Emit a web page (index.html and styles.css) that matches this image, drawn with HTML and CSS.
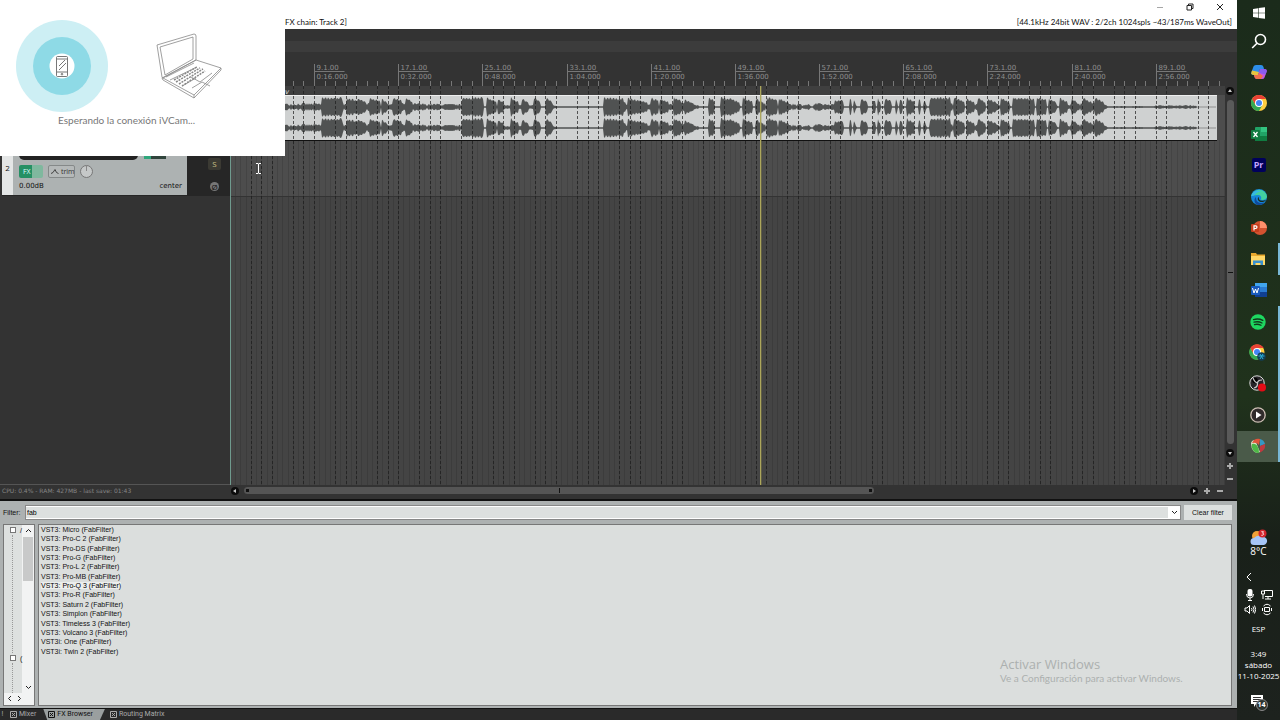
FILE: index.html
```html
<!DOCTYPE html>
<html lang="es">
<head>
<meta charset="utf-8">
<title>FX chain: Track 2</title>
<link rel="stylesheet" href="styles.css">
</head>
<body>
<div class="desktop">
  <main class="daw">
    <header class="titlebar">
      <div class="winbtns">
        <button class="winbtn faded" aria-label="Minimizar"><svg width="8" height="8"><path d="M1 4.500h6"/></svg></button>
        <button class="winbtn" aria-label="Restaurar"><svg width="8" height="8"><path d="M1 2.500h4.500v4.500h-4.500zM2.500 2.500v-1.500h4.500v4.500h-1.500"/></svg></button>
        <button class="winbtn" aria-label="Cerrar"><svg width="8" height="8"><path d="M1 1l6 6M7 1l-6 6"/></svg></button>
      </div>
      <div class="titleline"><span class="chain">FX chain: Track 2]</span><span>[44.1kHz 24bit WAV : 2/2ch 1024spls ~43/187ms WaveOut]</span></div>
    </header>
    <div class="toolstrip"></div>
    <section class="workspace">
      <aside class="tcp">
        <div class="track">
          <div class="tracknum">2</div>
          <div class="trackbody">
            <div class="faders"><i class="fader"></i><i class="meter"></i></div>
            <div class="trackrow">
              <button class="fx">FX</button>
              <button class="trim"><svg width="9" height="7"><path d="M1 5.500l2-1 2-3 1.500 3 2 1" fill="none" stroke="#444"/></svg>trim</button>
              <button class="knob" aria-label="Pan"></button>
            </div>
            <div class="trackvals"><span>0.00dB</span><span>center</span></div>
          </div>
          <div class="trackside">
            <button class="solo">S</button>
            <button class="phase">Ø</button>
          </div>
        </div>
        <p class="status">CPU: 0.4% - RAM: 427MB - last save: 01:43</p>
      </aside>
      <div class="arrange">
        <svg class="ruler" id="ruler"></svg>
        <svg class="lanes" id="lanes"></svg>
        <div class="hscroll">
          <button class="dot" aria-label="Izquierda"><svg width="8" height="8"><path d="M5 2v4l-3-2z"/></svg></button>
          <div class="htrack"><div class="hthumb"><i></i><b></b><i></i></div></div>
          <button class="dot" aria-label="Derecha"><svg width="8" height="8"><path d="M3 2v4l3-2z"/></svg></button>
          <button class="zoom" aria-label="Acercar"><svg width="8" height="8"><path d="M1 4h6M4 1v6"/></svg></button>
          <button class="zoom" aria-label="Alejar"><svg width="8" height="8"><path d="M1 4h6"/></svg></button>
        </div>
      </div>
      <div class="vscroll">
        <button class="dot" aria-label="Arriba"><svg width="8" height="8"><path d="M2 5h4l-2-3z"/></svg></button>
        <div class="vthumb"></div>
        <button class="dot" aria-label="Abajo"><svg width="8" height="8"><path d="M2 3h4l-2 3z"/></svg></button>
        <button class="zoom" aria-label="Acercar vertical"><svg width="8" height="8"><path d="M1 4h6M4 1v6"/></svg></button>
        <button class="zoom" aria-label="Alejar vertical"><svg width="8" height="8"><path d="M1 4h6"/></svg></button>
      </div>
    </section>
    <section class="browser">
      <div class="filterbar">
        <label for="filter">Filter:</label>
        <div class="combo"><input id="filter" type="text" value="fab"><button aria-label="Historial"><svg width="7" height="5"><path d="M1 1l2.500 2.500 2.500-2.500"/></svg></button></div>
        <button class="clear">Clear filter</button>
      </div>
      <div class="panes">
        <div class="tree">
          <div class="treemain">
            <div class="nodes">
              <div class="node"><button aria-label="Expandir"></button>/</div>
              <div class="branch"></div>
              <div class="node"><button aria-label="Expandir"></button>(</div>
              <div class="branch short"></div>
            </div>
            <div class="treescroll">
              <svg width="7" height="5"><path d="M1 4l2.500-2.500 2.500 2.500"/></svg>
              <i></i>
              <svg width="7" height="5"><path d="M1 1l2.500 2.500 2.500-2.500"/></svg>
            </div>
          </div>
          <div class="treefoot"><svg width="5" height="7"><path d="M4 1l-2.500 2.500 2.500 2.500"/></svg><svg width="5" height="7"><path d="M1 1l2.500 2.500-2.500 2.500"/></svg></div>
        </div>
        <div class="results">
          <ul>
            <li>VST3: Micro (FabFilter)</li>
            <li>VST3: Pro-C 2 (FabFilter)</li>
            <li>VST3: Pro-DS (FabFilter)</li>
            <li>VST3: Pro-G (FabFilter)</li>
            <li>VST3: Pro-L 2 (FabFilter)</li>
            <li>VST3: Pro-MB (FabFilter)</li>
            <li><mark>VST3: Pro-Q 3 (FabFilter)</mark></li>
            <li>VST3: Pro-R (FabFilter)</li>
            <li>VST3: Saturn 2 (FabFilter)</li>
            <li>VST3: Simplon (FabFilter)</li>
            <li>VST3: Timeless 3 (FabFilter)</li>
            <li>VST3: Volcano 3 (FabFilter)</li>
            <li>VST3i: One (FabFilter)</li>
            <li>VST3i: Twin 2 (FabFilter)</li>
          </ul>
        </div>
      </div>
    </section>
    <nav class="tabs">
      <span class="bang">!</span>
      <button class="tab"><svg width="7" height="7"><path d="M.5.5h6v6h-6zM2 2l3 3M5 2l-3 3"/></svg>Mixer</button>
      <button class="tab active"><svg width="7" height="7"><path d="M.5.5h6v6h-6zM2 2l3 3M5 2l-3 3"/></svg>FX Browser</button>
      <button class="tab"><svg width="7" height="7"><path d="M.5.5h6v6h-6zM2 2l3 3M5 2l-3 3"/></svg>Routing Matrix</button>
    </nav>
  </main>

  <aside class="taskbar">
    <button class="start" aria-label="Inicio"><svg width="16" height="16" viewBox="0 0 16 16" fill="#fff"><path d="M2 4l5-.8v4.500H2zM7.600 3.100L14 2.200v5.500H7.600zM2 8.300h5v4.500L2 12zM7.600 8.300H14v5.500l-6.400-.9z"/></svg></button>
    <nav class="apps">
      <button aria-label="Buscar"><svg width="16" height="16" viewBox="0 0 16 16" fill="none" stroke="#fff" stroke-width="1.600"><circle cx="9.500" cy="6.500" r="5"/><path d="M6 10.200L1.200 15"/></svg></button>
      <button aria-label="Copilot"><svg width="16" height="16" viewBox="0 0 16 16"><path d="M5 1h5q2 0 2.500 2l.5 2H9L7 11H2.500Q-.5 11 .5 8l2-5.500Q3 1 5 1z" fill="#2d8eea"/><path d="M1 6.500L.5 8q-1 3 2 3H7l1-3z" fill="#e8c53e"/><path d="M11 15H6q-2 0-2.500-2L3 11h4l2-6h4.500q3 0 2 3l-2 5.500Q13 15 11 15z" fill="#c458df"/><path d="M9 5h4.500q3 0 2 3l-1 2.500L8 9z" fill="#8a5cf0"/><path d="M3 11h4l1-2 4 3-2 3H6q-2 0-2.500-2z" fill="#f0704c"/></svg></button>
      <button aria-label="Chrome"><svg width="16" height="16" viewBox="0 0 16 16"><circle cx="8" cy="8" r="8" fill="#ffcd40"/><path d="M1 4a8 8 0 0 1 14 0H8L4.500 10z" fill="#e94235"/><path d="M1 4a8 8 0 0 0 7 12l3.500-6-3.500 2-3.500-2z" fill="#34a853"/><circle cx="8" cy="8" r="4" fill="#fff"/><circle cx="8" cy="8" r="3" fill="#4285f4"/></svg></button>
      <button aria-label="Excel"><svg width="16" height="16" viewBox="0 0 16 16"><rect x="4" y="1" width="12" height="14" rx="1" fill="#21a366"/><path d="M10 1h6v5h-6z" fill="#33c481"/><path d="M4 10h12v5H4z" fill="#107c41"/><rect y="4" width="9" height="9" rx="1" fill="#107c41"/><path d="M2.500 6l4 5M6.500 6l-4 5" stroke="#fff" stroke-width="1.300"/></svg></button>
      <button aria-label="Premiere Pro"><span class="pr">Pr</span></button>
      <button aria-label="Edge"><svg width="16" height="16" viewBox="0 0 16 16"><circle cx="8" cy="8" r="8" fill="#1687d8"/><path d="M.3 7A8 8 0 0 1 16 7.500c0 3-4 4-6.500 3 1.500-1 1-4.500-2.500-4.500S1 7 .3 7z" fill="#42cfa0"/><path d="M.3 7C1.500 2 7 .500 10.500 3 6 2 5 5 3.500 6S.5 7.500.3 7z" fill="#35b8e8"/><path d="M5 8c-.5 5 4 7 8.500 5.500A8 8 0 0 1 7 16C3 15 2.500 10 5 8z" fill="#114a9b"/><path d="M8 8c-1 3 2 5 7 3-2 3-7 2.500-8 0-.6-1.200 0-2.500 1-3z" fill="#1b2a1a"/></svg></button>
      <button aria-label="PowerPoint"><svg width="16" height="16" viewBox="0 0 16 16"><circle cx="9" cy="8" r="7" fill="#d35230"/><path d="M9 1a7 7 0 0 1 7 7H9z" fill="#ff8f6b"/><rect y="4" width="8" height="8" rx="1" fill="#c43e1c"/><path d="M3 10.500V5.800h1.600q1.400 0 1.400 1.300T4.600 8.500H3" fill="none" stroke="#fff" stroke-width="1.200"/></svg></button>
      <button class="running" aria-label="Explorador"><svg width="16" height="16" viewBox="0 0 16 16"><path d="M1 2h5l1 1.500h8V14H1z" fill="#e8a92e"/><path d="M1 5h14v9H1z" fill="#ffd867"/><path d="M3 14V9.500h10V14h-2.500v-2h-5v2z" fill="#3a91cf"/></svg></button>
      <button aria-label="Word"><svg width="16" height="16" viewBox="0 0 16 16"><rect x="4" y="1" width="12" height="14" rx="1" fill="#2b7cd3"/><path d="M4 1h12v4H4z" fill="#41a5ee"/><path d="M4 10h12v5H4z" fill="#103f91"/><rect y="4" width="9" height="9" rx="1" fill="#185abd"/><path d="M1.500 6l1.500 5 1.500-4 1.500 4 1.500-5" fill="none" stroke="#fff"/></svg></button>
      <button class="running" aria-label="Spotify"><svg width="16" height="16" viewBox="0 0 16 16"><circle cx="8" cy="8" r="7.700" fill="#1ed760"/><path d="M3.500 5.600q5-1.500 9.300.8M4 8.200q4.200-1.200 8 .8M4.500 10.600q3.500-.9 6.500.7" fill="none" stroke="#10391c" stroke-width="1.300" stroke-linecap="round"/></svg></button>
      <button class="running" aria-label="Chrome, perfil"><svg width="17" height="17" viewBox="0 0 17 17"><circle cx="8" cy="8" r="7.500" fill="#ffcd40"/><path d="M1.300 4a8 8 0 0 1 13.500 0H8L4.500 10z" fill="#e94235"/><path d="M1.300 4a8 8 0 0 0 7 12l3-6-3.300 2-3.500-2z" fill="#34a853"/><circle cx="8" cy="8" r="4" fill="#fff"/><circle cx="8" cy="8" r="3" fill="#4285f4"/><circle cx="12.500" cy="12.500" r="4.300" fill="#123e55"/><path d="M9.500 12h6M11 10l3 5M14 10l-3 5" stroke="#2eb3dc"/></svg></button>
      <button class="running" aria-label="OBS"><svg width="17" height="17" viewBox="0 0 17 17"><circle cx="8" cy="8" r="7.200" fill="#272529" stroke="#ddd"/><circle cx="6" cy="5.500" r="2.800" fill="#000"/><path d="M4 3q2 5 5 5M13 5q-5 0-4.500 4M5 13q4-1 3.500-5" fill="none" stroke="#c8c8c8" stroke-width="1.200"/><circle cx="13" cy="12.500" r="4" fill="#e30c16"/></svg></button>
      <button class="running" aria-label="Reproductor"><svg width="16" height="16" viewBox="0 0 16 16"><circle cx="8" cy="8" r="7.200" fill="#302b2b" stroke="#cfc0b6" stroke-width="1.300"/><path d="M6 4.500v7L11.500 8z" fill="#fff"/></svg></button>
      <button class="running current" aria-label="REAPER"><svg width="16" height="16" viewBox="0 0 16 16"><path d="M1 5q1-3 4-3l5 12q-4 2-6.500-1T1 5z" fill="#dfe3c5"/><path d="M2 6q3-1 5 1.500t2 7.500q-4 .5-6-3T2 6z" fill="#4eb748"/><path d="M4 2q3-2 6-1l-1 6q-2-3-7-2z" fill="#e2553c"/><path d="M10 1q4 1 5 5l-5 2z" fill="#3597c4"/><path d="M15 6q1 6-5 8.500V8z" fill="#c03a3f"/></svg></button>
    </nav>
    <div class="tray">
      <div class="weather"><svg width="18" height="17" viewBox="0 0 18 17"><circle cx="7" cy="7" r="5" fill="#f0a136"/><path d="M4 16a3.500 3.500 0 0 1 0-7q4-4 8-1a4 4 0 0 1 2 8z" fill="#a6c5f7"/><circle cx="12.500" cy="4.500" r="4" fill="#d3222c"/><path d="M11.300 2.700h2.200l-1 1.500q1.300 0 1.200 1.100t-2.400 1" fill="none" stroke="#fff" stroke-width=".8"/></svg><span>8°C</span></div>
      <svg class="chev" width="6" height="10" viewBox="0 0 6 10" fill="none" stroke="#fff"><path d="M5 1L1 5l4 4"/></svg>
      <div class="trayicons">
        <svg width="12" height="13" viewBox="0 0 12 13"><rect x="3.500" y="1" width="5" height="7.500" rx="2" fill="#fff"/><path d="M2.500 6q0 4 3.500 4t3.500-4M6 10v2.500M4 12.500h4" fill="none" stroke="#fff"/></svg>
        <svg width="12" height="13" viewBox="0 0 12 13" fill="none" stroke="#fff"><path d="M3 2.500h8.500v6H4M7 8.500V11M4 11h6M.5 3h3v3h-3zM2 6v5"/></svg>
        <svg width="12" height="13" viewBox="0 0 12 13" fill="none" stroke="#fff"><path d="M1 5h2l2.500-2.500v8L3 8H1zM7.500 5q1 1.500 0 3M9 3.500q2 3 0 6M10.500 2.500q2.500 4 0 8"/></svg>
        <svg width="12" height="13" viewBox="0 0 12 13" fill="none" stroke="#fff"><path d="M3.500 4.500h5v4h-5zM2.500 3q3.500-3.500 7 0M2.500 10q3.500 3.500 7 0M1.500 5v3M10.500 5v3"/></svg>
      </div>
      <span class="lang">ESP</span>
      <div class="clock"><span>3:49</span><span>sábado</span><span>11-10-2025</span></div>
      <button class="notif" aria-label="14 notificaciones"><svg width="18" height="18" viewBox="0 0 18 18"><path d="M1 2h12v9H6l-2 3v-3H1z" fill="#fff"/><path d="M3 4.500h8M3 6.500h8M3 8.500h5" stroke="#333"/><circle cx="12" cy="12" r="5.500" fill="#2d332e" stroke="#888"/></svg><b>14</b></button>
    </div>
  </aside>

  <section class="ivcam">
    <div class="devices">
      <svg class="phone" width="92" height="92" viewBox="0 0 92 92"><circle cx="46" cy="46" r="46" fill="#cdeff4"/><circle cx="46" cy="46" r="29" fill="#8edae6"/><circle cx="46" cy="46" r="12.500" fill="#fff"/><g fill="none" stroke="#555" stroke-width=".8"><rect x="40.500" y="36.500" width="11" height="20" rx="1"/><path d="M41 39h10M41 52h10M43 46l6-6M43 50l7-7"/><circle cx="46" cy="54.200" r=".8"/></g></svg>
      <svg class="laptop" width="66" height="66" viewBox="0 0 66 66" fill="none" stroke="#888" stroke-width=".8"><path d="M1 12L38 1q2 0 2 2v24L7 45q-1 0-1-1zM4 14l33-10v22L9 42zM6 45l34-18 25 8v2L38 65 7 47zM7 45l31 17 27-27M38 62v3M10 44l28-14M14 47l27-13M36 55l10-6 8 4M35 44l9 5 12-9M28 52l12-7"/><g stroke-dasharray="2 1" stroke-width="1.500"><path d="M18 47l23-13M20 49l24-14M23 51l24-15M26 53l23-15"/></g></svg>
    </div>
    <p>Esperando la conexión iVCam...</p>
  </section>
  <svg class="cursor" width="7" height="11" viewBox="0 0 7 11" fill="none" stroke="#fff"><path d="M1 .5h2l.5.5.5-.5h2M3.500 1v9M1 10.500h2l.5-.5.5.5h2"/></svg>
  <div class="watermark"><span>Activar Windows</span><small>Ve a Configuración para activar Windows.</small></div>
</div>
<script src="timeline.js"></script>
</body>
</html>
```
FILE: styles.css
```css
* { box-sizing: border-box; }
body, p, ul { margin: 0; padding: 0; }
body { font-family: "Open Sans", "Noto Sans", sans-serif; font-size: 8px; color: #111; overflow: hidden; }
button { border: 0; padding: 0; background: none; font: inherit; color: inherit; }
svg { display: block; flex: none; }
.desktop { position: relative; display: flex; height: 100vh; background: #1b2a1a; }
.daw { flex: 1; min-width: 0; display: flex; flex-direction: column; background: #333; }

.titlebar { background: #fff; height: 29px; }
.winbtns { display: flex; justify-content: flex-end; gap: 22px; height: 15px; padding: 3px 13px 0 0; }
.winbtn { height: 8px; width: 8px; }
.winbtn path { fill: none; stroke: #222; }
.faded { opacity: .4; }
.titleline { display: flex; justify-content: space-between; padding: 0 5px 0 285px; font-family: Lato, sans-serif; line-height: 14px; }
.toolstrip { height: 23px; background: #3c3c3c; border-top: 12px solid #333; }

.workspace { flex: 1; min-height: 0; display: flex; border-bottom: 2px solid #111; }
.tcp { width: 230px; display: flex; flex-direction: column; justify-content: space-between; background: #333; }
.track { display: flex; height: 101px; margin: 43px 0 0 2px; background: #262626; }
.tracknum { width: 11px; background: #e4e6e6; text-align: center; line-height: 12px; padding-top: 67px; height: 100px; }
.trackbody { flex: 1; height: 100px; background: #adb2b2; padding: 58px 5px 0 6px; display: flex; flex-direction: column; gap: 4px; }
.faders { display: flex; gap: 6px; height: 7px; flex: none; }
.fader { width: 119px; background: #222; border-radius: 0 0 5px 5px; }
.meter { width: 22px; height: 6px; background: linear-gradient(90deg, #2fa77c 30%, #30443c 30%); }
.trackrow { display: flex; align-items: center; gap: 5px; height: 14px; flex: none; }
.fx { width: 24px; height: 13px; border-radius: 2px; color: #dff; text-align: left; padding-left: 4px; font-size: 7px; background: linear-gradient(90deg, #259064 55%, #7fb89e 55%); }
.trim { display: flex; align-items: center; gap: 2px; width: 27px; height: 13px; border: 1px solid #858989; border-radius: 2px; padding-left: 1px; font-size: 7px; color: #333; background: #b5b9b9; }
.knob { width: 13px; height: 13px; border: 1px solid #777; border-radius: 50%; background: linear-gradient(90deg, transparent 5px, #888 5px, #888 6px, transparent 6px) 0 0 / 100% 5px no-repeat #c5c8c8; }
.trackvals { display: flex; justify-content: space-between; font: 7px/8px "DejaVu Sans", sans-serif; }
.trackside { width: 43px; display: flex; flex-direction: column; align-items: flex-end; gap: 12px; padding: 63px 9px 0 0; }
.solo { width: 13px; height: 12px; background: #3b3a33; color: #c9c086; border-radius: 2px; line-height: 12px; }
.phase { width: 9px; height: 9px; margin-right: 2px; border-radius: 50%; background: #777; color: #111; line-height: 9px; }
.status { height: 15px; border-top: 1px solid #555; padding: 1px 0 0 2px; color: #858585; font: 6px/10px "DejaVu Sans", sans-serif; }

.arrange { flex: 1; min-width: 0; display: flex; flex-direction: column; }
.ruler { width: 100%; height: 34px; background: #333; }
.ruler text { font: 7px "DejaVu Sans", sans-serif; fill: #8e8e8e; }
.lanes { flex: 1; width: 100%; min-height: 0; background: #444; border-left: 1px solid #6f9a8e; }
.lanes .name { font: italic 7px "DejaVu Sans", sans-serif; fill: #ddd; }
.hscroll { display: flex; align-items: center; gap: 5px; height: 14px; padding: 0 1px 3px 1px; background: #333; }
.htrack { flex: 1; }
.hthumb { display: flex; justify-content: space-between; align-items: center; width: 67%; height: 7px; padding: 0 2px; background: #555; border-radius: 4px; }
.hthumb i { width: 3px; height: 3px; background: #111; }
.hthumb b { width: 1px; height: 5px; background: #111; }
.dot { width: 8px; height: 8px; border-radius: 50%; background: #0c0c0c; flex: none; }
.dot path { fill: #ccc; }
.zoom { width: 8px; height: 8px; flex: none; }
.zoom path { stroke: #aaa; stroke-width: 2; }
.vscroll { width: 12px; display: flex; flex-direction: column; align-items: center; gap: 5px; padding: 35px 2px 16px 0; background: #333; }
.vthumb { flex: 1; width: 7px; border-radius: 4px; background: linear-gradient(#111, #111) center / 5px 1px no-repeat #5a5a5a; }

.browser { height: 208px; display: flex; flex-direction: column; gap: 4px; padding: 4px 5px 2px 3px; background: #adb1b1; border-bottom: 1px solid #111; font: 7px "Liberation Sans", sans-serif; }
.filterbar { display: flex; align-items: stretch; height: 15px; line-height: 16px; gap: 3px; }
.filterbar label { width: 19px; }
.combo { flex: 1; display: flex; background: #fff; border: 1px solid #888; }
.combo input { flex: 1; min-width: 0; border: 0; padding: 0 1px; margin: 1px 0; background: #dde0df; font: inherit; outline: 0; }
.combo button { width: 12px; display: grid; place-items: center; }
.combo path, .tree path { fill: none; stroke: #222; }
.clear { width: 48px; background: #dde0df; }
.panes { flex: 1; min-height: 0; display: flex; gap: 3px; }
.tree { width: 32px; display: flex; flex-direction: column; background: #f2f3f3; border: 1px solid #777; }
.treemain { flex: 1; display: flex; }
.nodes { flex: 1; display: flex; flex-direction: column; padding-left: 6px; background: #dde0df; }
.node { display: flex; align-items: center; gap: 4px; height: 10px; }
.node button { width: 6px; height: 6px; border: 1px solid #777; background: #fff; flex: none; }
.branch { flex: 1; margin-left: 2px; border-left: 1px dotted #999; }
.short { flex: none; height: 30px; }
.treescroll { width: 12px; display: flex; flex-direction: column; align-items: center; gap: 4px; padding: 3px 0; }
.treescroll i { width: 10px; height: 44px; background: #c8c9c9; margin-bottom: auto; }
.treefoot { display: flex; gap: 5px; height: 12px; padding: 2px 3px; }
.results { flex: 1; background: #dbdedd; border: 1px solid #777; }
.results ul { list-style: none; height: 131px; display: grid; grid-auto-rows: 1fr; line-height: 9px; padding-left: 2px; }
.results mark { background: #eceeed; color: #000; }

.tabs { height: 11px; display: flex; background: #2a2a2a; color: #aaa; font: 7px/11px Roboto, sans-serif; }
.bang { width: 5px; text-align: center; }
.tab { display: flex; align-items: center; gap: 2px; padding: 0 7px 0 5px; }
.tab path { fill: none; stroke: currentColor; }
.tab.active { padding-right: 12px; background: #9a9f9f; color: #111; clip-path: polygon(0 0, 100% 0, calc(100% - 5px) 100%, 4px 100%); }

.taskbar { width: 43px; display: flex; flex-direction: column; color: #fff; background: linear-gradient(#1b2b1b, #20321c 55%, #192019 75%, #1d221e); }
.taskbar > .start { display: grid; place-items: center; height: 25px; }
.apps { display: grid; grid-auto-rows: 1fr; height: 437px; }
.apps button { display: grid; place-items: center; }
.apps .running { border-right: 2px solid #79b8d6; }
.current { background: #4a5a49; }
.pr { width: 14px; height: 14px; background: #00005b; color: #c4a6ff; border-radius: 2px; font: bold 9px/14px "Open Sans", sans-serif; }
.tray { flex: 1; display: flex; flex-direction: column; align-items: center; padding: 67px 0 9px; line-height: 11px; }
.weather { display: flex; flex-direction: column; align-items: center; font-size: 10px; }
.chev { margin: 15px 20px 6px 0; }
.trayicons { display: grid; grid-template-columns: 12px 12px; gap: 2px 5px; }
.lang { margin-top: 7px; }
.clock { display: flex; flex-direction: column; align-items: center; margin-top: 14px; white-space: nowrap; }
.notif { position: relative; margin-top: auto; }
.notif b { position: absolute; right: 2px; bottom: 1px; font-size: 7px; line-height: 10px; }

.ivcam { position: absolute; left: 0; top: 0; width: 285px; height: 156px; background: #fff; padding: 20px 0 0 16px; color: #777; }
.devices { display: flex; gap: 48px; height: 92px; }
.laptop { margin-top: 13px; }
.ivcam p { margin-left: 42px; font: 10px/16px Lato, sans-serif; }
.cursor { position: absolute; left: 255px; top: 163px; }
.watermark { position: absolute; right: 95px; bottom: 35px; width: 185px; display: flex; flex-direction: column; color: #acb0af; font-size: 13px; line-height: 16px; white-space: nowrap; }
.watermark small { font: 10px/13px Lato, sans-serif; }
```
FILE: timeline.js
```js
(function () {
  var NS = 'http://www.w3.org/2000/svg';
  var ORIGIN = 84;           // x of bar 9 in the arrange view
  var BARS8 = 8417 / 100;    // pixels for eight bars
  var STEP = BARS8 / 8;

  function add(parent, tag, attrs, text) {
    var el = document.createElementNS(NS, tag);
    for (var k in attrs) el.setAttribute(k, attrs[k]);
    if (text) el.textContent = text;
    parent.appendChild(el);
    return el;
  }
  function crisp(x) { return Math.round(x) + 0.5; }

  var ruler = document.getElementById('ruler');
  var times = ['0:16.000', '0:32.000', '0:48.000', '1:04.000', '1:20.000', '1:36.000',
    '1:52.000', '2:08.000', '2:24.000', '2:40.000', '2:56.000'];
  for (var n = -7; n < 87; n++) {
    var tx = crisp(ORIGIN + n * STEP);
    add(ruler, 'path', { d: 'M' + tx + ' 29v5', stroke: '#777' });
  }
  times.forEach(function (t, i) {
    var x = crisp(ORIGIN + i * BARS8);
    add(ruler, 'path', { d: 'M' + x + ' 12v22M' + x + ' 19.5h30', stroke: '#777', fill: 'none' });
    add(ruler, 'text', { x: x + 2, y: 18 }, (9 + i * 8) + '.1.00');
    add(ruler, 'text', { x: x + 2, y: 27 }, t);
  });

  var lanes = document.getElementById('lanes');
  var LEFT = ORIGIN - 1;     // the lanes start after a one-pixel border
  add(lanes, 'rect', { x: 0, y: 0, width: '100%', height: 9, fill: '#3f3f3f' });
  add(lanes, 'rect', { x: 0, y: 9, width: '100%', height: 101, fill: '#4d4d4d' });
  for (var h = -16; h < 174; h++) {
    var fx = crisp(LEFT + h * STEP / 2);
    add(lanes, 'path', { d: 'M' + fx + ' 54V600', stroke: '#000', opacity: 0.1 });
  }
  add(lanes, 'path', { d: 'M0 110.5H1000', stroke: '#333' });

  add(lanes, 'rect', { x: 0, y: 9, width: 986, height: 45, fill: '#cfd1d1' });
  add(lanes, 'path', { d: 'M0 9.5H986', stroke: '#eee' });
  add(lanes, 'path', { d: 'M0 54.5H986', stroke: '#111' });
  add(lanes, 'text', { x: 54, y: 8, 'class': 'name' }, 'v');

  // Bursts: start, end, level at start, level at end (arrange pixels, level 0-10)
  var bursts = [
    [0, 91, 4, 4], [91, 112, 10, 10], [112, 116, 5, 3], [116, 127, 10, 7], [127, 136, 9, 5],
    [136, 139, 4, 4], [139, 150, 10, 6], [151, 158, 9, 4], [158, 162, 3, 3], [162, 171, 10, 7],
    [171, 175, 4, 3], [175, 183, 10, 4], [183, 230, 4, 3],
    [231, 253, 10, 10], [256, 266, 10, 6], [267, 276, 9, 3], [276, 280, 2, 2], [280, 288, 10, 5],
    [288, 291, 3, 2], [291, 298, 9, 4], [298, 303, 2, 2],
    [303, 310, 10, 6], [315, 323, 10, 4], [323, 327, 2, 1], [373, 393, 10, 9], [393, 397, 6, 4],
    [397, 407, 10, 7], [407, 418, 8, 4], [418, 420, 3, 3], [420, 428, 10, 7], [429, 438, 9, 5],
    [438, 443, 4, 3], [443, 451, 10, 7], [451, 454, 4, 4],
    [454, 468, 8, 2], [478, 484, 10, 6], [490, 499, 10, 9], [499, 510, 10, 4], [512, 522, 10, 6],
    [525, 535, 9, 4], [536, 547, 10, 8], [548, 560, 9, 4], [560, 580, 4, 3], [583, 604, 4, 3],
    [604, 613, 7, 8], [619, 621, 9, 7], [623, 626, 7, 4], [630, 637, 9, 6], [642, 645, 8, 5],
    [647, 650, 9, 4], [654, 661, 9, 7], [665, 667, 9, 6], [669, 672, 9, 5], [676, 684, 10, 5],
    [688, 690, 9, 7], [693, 696, 8, 3], [699, 720, 10, 10], [720, 723, 4, 4], [723, 734, 10, 6],
    [736, 744, 9, 5], [744, 747, 4, 3],
    [747, 755, 10, 5], [757, 766, 9, 5], [766, 770, 3, 3], [770, 780, 10, 4], [782, 804, 10, 9],
    [806, 816, 10, 8], [818, 827, 9, 4], [829, 837, 10, 5], [837, 841, 4, 4], [841, 848, 9, 4],
    [848, 852, 4, 4], [852, 861, 10, 5], [861, 864, 4, 4], [864, 873, 10, 5],
    [873, 877, 4, 1], [877, 915, 1, 1], [922, 966, 2, 2]
  ];
  var seed = 7;
  function noise() { seed = (seed * 16807) % 2147483647; return seed / 2147483647; }
  var env = [];
  for (var x = 0; x < 986; x++) env.push(x < 966 ? 0.8 : 0.3);
  bursts.forEach(function (b) {
    for (var x = b[0]; x < b[1]; x++) {
      var t = (x - b[0]) / (b[1] - b[0]);
      var v = b[2] + (b[3] - b[2]) * t;
      var dip = v > 5 ? (x % 3 === 0 ? 0.8 : 1) : 0.35 + noise() * 0.75;
      env[x] = Math.max(0.7, v * dip * (0.85 + noise() * 0.15));
    }
  });
  [21, 42].forEach(function (cy) {
    var top = [], bottom = [];
    env.forEach(function (v, x) {
      top.push(x + ' ' + (cy - v).toFixed(1));
      bottom.unshift(x + ' ' + (cy + v).toFixed(1));
    });
    add(lanes, 'path', { d: 'M' + top.concat(bottom).join('L') + 'Z', fill: '#505252' });
  });

  // Grid steps that carry no dashed line at this zoom level
  var skipped = [-7, -3, 1, 5, 9, 13, 16, 20, 24, 28, 32, 36, 40, 44, 47, 48, 51, 52, 55, 59,
    63, 67, 71, 75, 79, 82, 83];
  for (var g = -7; g < 86; g++) {
    if (skipped.indexOf(g) >= 0) continue;
    var gx = crisp(LEFT + g * STEP);
    add(lanes, 'path', { d: 'M' + gx + ' 0V600', stroke: '#1c1c1c', 'stroke-dasharray': '3 2', opacity: 0.7 });
  }
  add(lanes, 'path', { d: 'M530.5 0V600', stroke: '#a39f55', opacity: 0.35 });
  add(lanes, 'path', { d: 'M529.5 0V600', stroke: '#aca65c' });
})();
```
